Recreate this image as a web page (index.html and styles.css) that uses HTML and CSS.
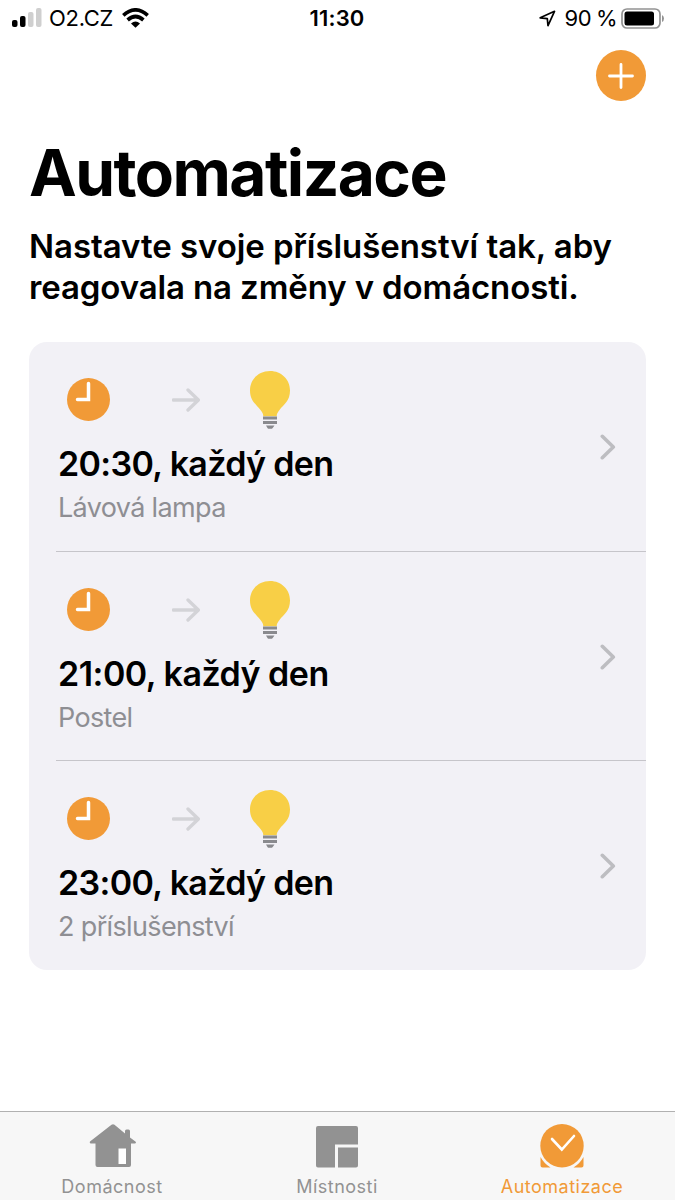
FILE: index.html
```html
<!DOCTYPE html>
<html lang="cs">
<head>
<meta charset="utf-8">
<title>Automatizace</title>
<link rel="stylesheet" href="styles.css">
</head>
<body>
<svg width="0" height="0" class="defs">
  <symbol id="clock" viewBox="0 0 43 43"><circle cx="21.5" cy="21.5" r="21.5" fill="#f19a37"/><path d="M21.500 5.5V21.500H10.500" fill="none" stroke="#fff" stroke-width="3.5" stroke-linecap="round" stroke-linejoin="miter"/></symbol>
  <symbol id="arrow" viewBox="0 0 28 24"><path d="M1.2 12H26M16 2l10.400 10L16 22" fill="none" stroke="#d3d3d7" stroke-width="3.300" stroke-linecap="round" stroke-linejoin="round"/></symbol>
  <symbol id="bulb" viewBox="0 0 40 58"><path d="M20 0C8.500 0 0 8.500 0 19.500C0 30 6 33 10.500 39C12.500 41.700 13.300 43 13.300 45.300H26.700C26.700 43 27.500 41.700 29.500 39C34 33 40 30 40 19.500C40 8.500 31.500 0 20 0Z" fill="#f8cf46"/><path d="M13 45.500h14v3H13zM13 50h14v3H13zM16 54.500h8.500l-2 2.700q-.7.600-1.500.6h-2q-.8 0-1.400-.6z" fill="#8a8a8e"/></symbol>
  <symbol id="chevron" viewBox="0 0 16 26"><path d="M2.300 2.300L13.300 13L2.300 23.700" fill="none" stroke="#bdbdc1" stroke-width="3.600" stroke-linecap="round" stroke-linejoin="round"/></symbol>
</svg>
<div class="screen">
  <div class="status">
    <div class="status-left">
      <svg width="31" height="20" viewBox="0 0 31 20"><g fill="#000"><rect x="0" y="12" width="5.500" height="7" rx="2"/><rect x="8" y="8" width="5.500" height="11" rx="2"/></g><g fill="#cfcfcf"><rect x="16" y="4" width="5.500" height="15" rx="2"/><rect x="24" y="0" width="5.500" height="19" rx="2"/></g></svg>
      <span class="carrier">O2.CZ</span>
      <svg class="wifi" width="27" height="20" viewBox="0 0 27 20"><g fill="none" stroke="#000" stroke-width="3.700"><path d="M1.300 7.300Q13.500-3.500 25.700 7.300"/><path d="M5.600 12Q13.500 5 21.400 12"/></g><path d="M9 15.500Q13.500 11.500 18 15.500L13.500 19.700Z"/></svg>
    </div>
    <span class="time">11:30</span>
    <div class="status-right">
      <svg width="17" height="17" viewBox="0 0 17 17"><path d="M1.200 7.800L15.500 1.300L9 15.600L8.300 8.600Z" fill="none" stroke="#000" stroke-width="1.700" stroke-linejoin="round"/></svg>
      <span class="percent">90 %</span>
      <svg width="43" height="21" viewBox="0 0 43 21"><rect x="1" y="1" width="38" height="19" rx="5" fill="none" stroke="#929292" stroke-width="1.700"/><rect x="3.500" y="3.500" width="29.500" height="14" rx="2.500"/><path d="M41 7v7q2-1 2-3.500t-2-3.500z" fill="#929292"/></svg>
    </div>
  </div>
  <div class="toolbar">
    <button class="add" aria-label="Přidat"><svg width="26" height="26" viewBox="0 0 26 26"><path d="M13 1.500v23M1.500 13h23" stroke="#fff" stroke-width="2.800" stroke-linecap="round"/></svg></button>
  </div>
  <main class="content">
    <h1 class="title">Automatizace</h1>
    <p class="lead">Nastavte svoje příslušenství tak, aby<br><span class="lead-second">reagovala na změny v domácnosti.</span></p>
    <div class="card">
      <div class="row"><div class="row-main">
        <div class="icons"><svg class="clock"><use href="#clock"/></svg><svg class="arrow"><use href="#arrow"/></svg><svg class="bulb"><use href="#bulb"/></svg></div>
        <div class="row-title">20:30, každý den</div><div class="row-sub">Lávová lampa</div></div>
        <svg class="chevron"><use href="#chevron"/></svg></div>
      <div class="row"><div class="row-main">
        <div class="icons"><svg class="clock"><use href="#clock"/></svg><svg class="arrow"><use href="#arrow"/></svg><svg class="bulb"><use href="#bulb"/></svg></div>
        <div class="row-title narrow">21:00, každý den</div><div class="row-sub">Postel</div></div>
        <svg class="chevron"><use href="#chevron"/></svg></div>
      <div class="row"><div class="row-main">
        <div class="icons"><svg class="clock"><use href="#clock"/></svg><svg class="arrow"><use href="#arrow"/></svg><svg class="bulb"><use href="#bulb"/></svg></div>
        <div class="row-title">23:00, každý den</div><div class="row-sub">2 příslušenství</div></div>
        <svg class="chevron"><use href="#chevron"/></svg></div>
    </div>
  </main>
  <nav class="tabs">
    <div class="tab"><svg class="home" width="48" height="44" viewBox="0 0 48 44"><path d="M22.500 .8Q24 -.3 25.500 .8L36 9.500V7q0-1.500 1.500-1.500h2q1.500 0 1.500 1.500v6.500l5.700 4.300q.8 1.700-1 1.700H42V41q0 2-2 2H8.500q-2 0-2-2V19.500H2q-1.800-.3-1-1.900Z" fill="#929292"/><path d="M29.500 24.500h7.500V40h-7.500z" fill="#fff"/></svg><span>Domácnost</span></div>
    <div class="tab"><svg width="43" height="44" viewBox="0 0 43 44"><path d="M2 2h38q2 0 2 2V20.500H19V43.500H2q-2 0-2-2V4q0-2 2-2zM22 23.500h20V41.500q0 2-2 2h-18z" fill="#929292"/></svg><span>Místnosti</span></div>
    <div class="tab active"><svg width="44" height="44" viewBox="0 0 44 44"><circle cx="22" cy="21.700" r="21.700" fill="#f19a37"/><path d="M12 15L21.800 25.500L34 12" fill="none" stroke="#fff" stroke-width="2.600" stroke-linecap="round"/><path d="M.5 33Q4 39.500 10.500 43.500H2.500Q.5 43.500 .5 41.500ZM43.500 33Q40 39.500 33.500 43.500H41.500Q43.500 43.500 43.500 41.500Z" fill="#f19a37"/></svg><span>Automatizace</span></div>
  </nav>
</div>
</body>
</html>
```
FILE: styles.css
```css
* { box-sizing: border-box; }
body { margin: 0; background: #fff; color: #000; font-family: Inter, "Liberation Sans", sans-serif; }
svg { display: block; flex: none; }
.defs { position: absolute; }
.screen { height: 1200px; display: flex; flex-direction: column; }
.status { height: 37px; padding: 0 11px 0 12px; display: grid; grid-template-columns: 1fr auto 1fr; align-items: center; font-size: 22px; line-height: 37px; white-space: nowrap; }
.status-left, .status-right { display: flex; align-items: center; }
.status-left svg { margin-bottom: 2px; }
.status-right { justify-content: flex-end; }
.carrier { margin-left: 6px; letter-spacing: -.3px; }
.wifi { margin-left: 9px; }
.time { margin-right: 2px; font-weight: 600; letter-spacing: .2px; }
.percent { margin: 0 4px 0 8px; letter-spacing: -.5px; word-spacing: -.8px; }
.toolbar { height: 64px; padding: 13px 29px 0; display: flex; justify-content: flex-end; }
.add { width: 50px; height: 51px; padding: 0; border: 0; border-radius: 50%; background: #f19a37; display: grid; place-items: center; }
.content { flex: 1; padding: 34px 29px 0; }
.title { margin: 0; font-size: 64px; line-height: 76px; font-weight: 700; letter-spacing: -1.550px; white-space: nowrap; }
.lead { margin: 15px 0 35px; font-size: 33px; line-height: 40.500px; font-weight: 600; white-space: nowrap; letter-spacing: -.06px; }
.lead-second { letter-spacing: -.12px; }
.card { border-radius: 18px; background: #f2f1f6; }
.row { height: 209.500px; padding: 29px 30px 0 29px; display: flex; justify-content: space-between; background: linear-gradient(#c6c5ca, #c6c5ca) 27px 100% / 100% 1px no-repeat; }
.row:last-child { height: 209px; background: none; }
.icons { height: 58px; padding-left: 9px; display: flex; align-items: center; }
.clock { width: 43px; height: 43px; margin-bottom: 1px; }
.arrow { width: 28px; height: 24px; margin-left: 62px; }
.bulb { width: 40px; height: 58px; margin-left: 50px; }
.row-title { margin-top: 15px; font-size: 34px; line-height: 40px; font-weight: 600; letter-spacing: -.660px; white-space: nowrap; }
.narrow { letter-spacing: -.5px; }
.row-sub { margin-top: 8px; font-size: 27px; line-height: 32px; letter-spacing: -.65px; color: #8e8e93; }
.chevron { width: 16px; height: 26px; margin-top: 63px; }
.tabs { height: 89px; border-top: 1px solid #b1b1b1; background: #f7f7f7; display: grid; grid-template-columns: repeat(3, 1fr); color: #929292; }
.tab { padding: 12px 1px 0 0; display: flex; flex-direction: column; align-items: center; font-size: 18px; line-height: 22px; font-weight: 400; letter-spacing: .5px; }
.tab span { margin-top: 8px; }
.home { margin-left: 2px; }
.active { color: #f19a37; }
```
